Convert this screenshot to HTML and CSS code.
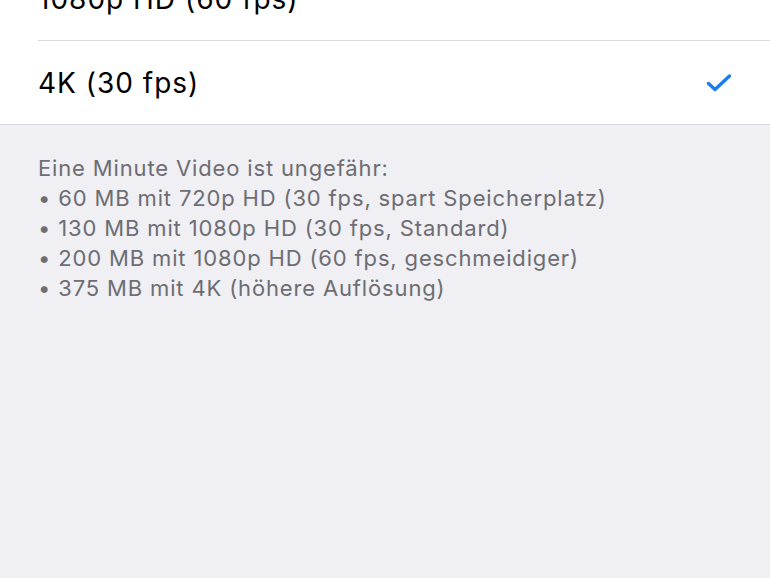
FILE: index.html
```html
<!DOCTYPE html>
<html lang="de">
<head>
<meta charset="utf-8">
<link rel="stylesheet" href="styles.css">
</head>
<body>
<div class="screen">
  <ul class="list">
    <li class="row"><span class="label">1080p HD (60 fps)</span></li>
    <li class="row selected"><span class="label">4K (30 fps)</span>
      <svg class="check" viewBox="0 0 26 20" width="26" height="20"><path d="M2.5 10.5 L9 16.5 L23.5 3" fill="none" stroke="#1a7cf0" stroke-width="3.4" stroke-linecap="round" stroke-linejoin="round"/></svg>
    </li>
  </ul>
  <div class="footer">
    <p>Eine Minute Video ist ungefähr:</p>
    <p>• 60 MB mit 720p HD (30 fps, spart Speicherplatz)</p>
    <p>• 130 MB mit 1080p HD (30 fps, Standard)</p>
    <p>• 200 MB mit 1080p HD (60 fps, geschmeidiger)</p>
    <p>• 375 MB mit 4K (höhere Auflösung)</p>
  </div>
</div>
</body>
</html>
```
FILE: styles.css
```css
html, body {
  margin: 0;
  padding: 0;
  background: #efeff4;
}
.screen {
  width: 770px;
  height: 578px;
  overflow: hidden;
  background: #efeff4;
  font-family: Inter, "Liberation Sans", Arial, sans-serif;
}
.list {
  list-style: none;
  margin: -43px 0 0 0;
  padding: 0 0 0 38px;
  background: #fff;
  border-bottom: 1px solid #d9d9dd;
}
.row {
  height: 83px;
  display: flex;
  align-items: center;
  justify-content: space-between;
  padding-right: 38px;
  font-size: 28px;
  letter-spacing: 1px;
  color: #000;
}
.row + .row {
  border-top: 1px solid #d9d9dd;
}
.check {
  display: block;
  margin-top: 1px;
}
.footer {
  padding: 28px 0 0 38px;
  color: #6d6d72;
  font-size: 22px;
  line-height: 30px;
  letter-spacing: 0.85px;
}
.footer p {
  margin: 0;
}
```
